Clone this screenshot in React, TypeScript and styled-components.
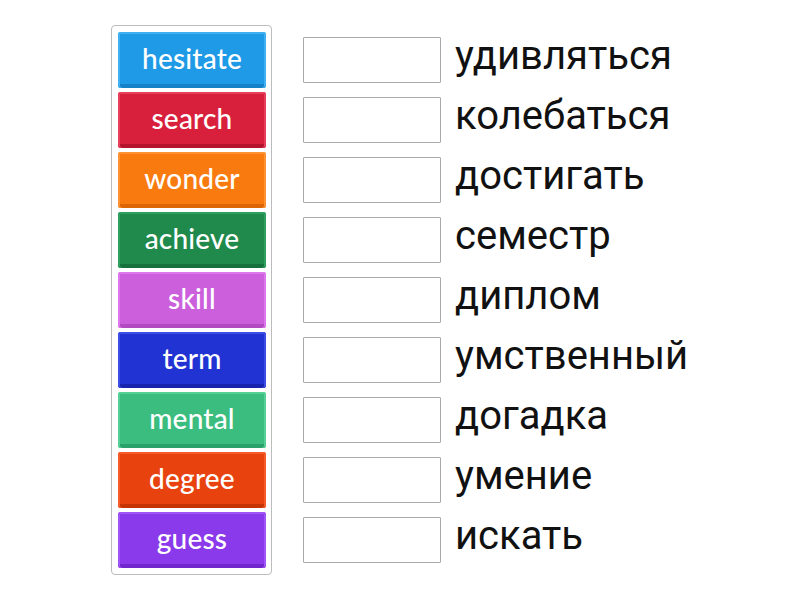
import React from "react";
import styled, { createGlobalStyle } from "styled-components";

const Global = createGlobalStyle`
  html, body { margin: 0; padding: 0; background: #fff; }
  body { width: 800px; height: 600px; overflow: hidden; }
`;

const Page = styled.div`
  display: flex;
  align-items: flex-start;
  padding: 25px 0 0 111px;
  gap: 31px;
`;

const Bank = styled.div`
  box-sizing: border-box;
  width: 161px;
  height: 550px;
  border: 1px solid #bcbcbc;
  border-radius: 4px;
  padding: 6px;
  display: flex;
  flex-direction: column;
  gap: 4px;
`;

const Tile = styled.div<{ $c: string; $light: string; $dark: string }>`
  box-sizing: border-box;
  height: 56px;
  width: 148px;
  border-radius: 3px;
  background: ${(p) => p.$c};
  box-shadow: inset 0 2px 0 ${(p) => p.$light}, inset 2px 0 0 ${(p) => p.$light},
    inset -2px 0 0 ${(p) => p.$light}, inset 0 -4px 0 ${(p) => p.$dark};
  display: flex;
  align-items: center;
  justify-content: center;
  padding-bottom: 5px;
  color: #fff;
  font-family: "Lato", "Open Sans", sans-serif;
  font-size: 28px;
  font-weight: 500;
  letter-spacing: 0.2px;
`;

const Targets = styled.div`
  padding-top: 5px;
  display: flex;
  flex-direction: column;
`;

const Row = styled.div`
  height: 60px;
  display: flex;
  align-items: center;
  gap: 14px;
`;

const Slot = styled.div`
  box-sizing: border-box;
  width: 138px;
  height: 46px;
  border: 1px solid #a9a9a9;
  border-radius: 1px;
  background: #fff;
`;

const Word = styled.div`
  font-family: "Roboto", "Liberation Sans", sans-serif;
  font-size: 40px;
  color: #111;
  line-height: 1;
  padding-bottom: 8px;
`;

const tiles = [
  { t: "hesitate", c: "#1f9ae6", l: "#3fb0f2", d: "#1781c8" },
  { t: "search", c: "#d81f3c", l: "#e8405a", d: "#b5142d" },
  { t: "wonder", c: "#f97b0f", l: "#ff9333", d: "#dc6606" },
  { t: "achieve", c: "#1f8a4c", l: "#2fa060", d: "#16713c" },
  { t: "skill", c: "#cb5fdc", l: "#dc78ec", d: "#b24ac2" },
  { t: "term", c: "#2133d2", l: "#3b4fe6", d: "#1824ad" },
  { t: "mental", c: "#3bbd80", l: "#55d197", d: "#2aa16a" },
  { t: "degree", c: "#e8420f", l: "#f55c2a", d: "#c43405" },
  { t: "guess", c: "#8a3aea", l: "#a055f7", d: "#7027cc" },
];

const words = [
  "удивляться",
  "колебаться",
  "достигать",
  "семестр",
  "диплом",
  "умственный",
  "догадка",
  "умение",
  "искать",
];

export default function App() {
  return (
    <>
      <Global />
      <Page>
        <Bank>
          {tiles.map((x) => (
            <Tile key={x.t} $c={x.c} $light={x.l} $dark={x.d}>
              {x.t}
            </Tile>
          ))}
        </Bank>
        <Targets>
          {words.map((w) => (
            <Row key={w}>
              <Slot />
              <Word>{w}</Word>
            </Row>
          ))}
        </Targets>
      </Page>
    </>
  );
}
